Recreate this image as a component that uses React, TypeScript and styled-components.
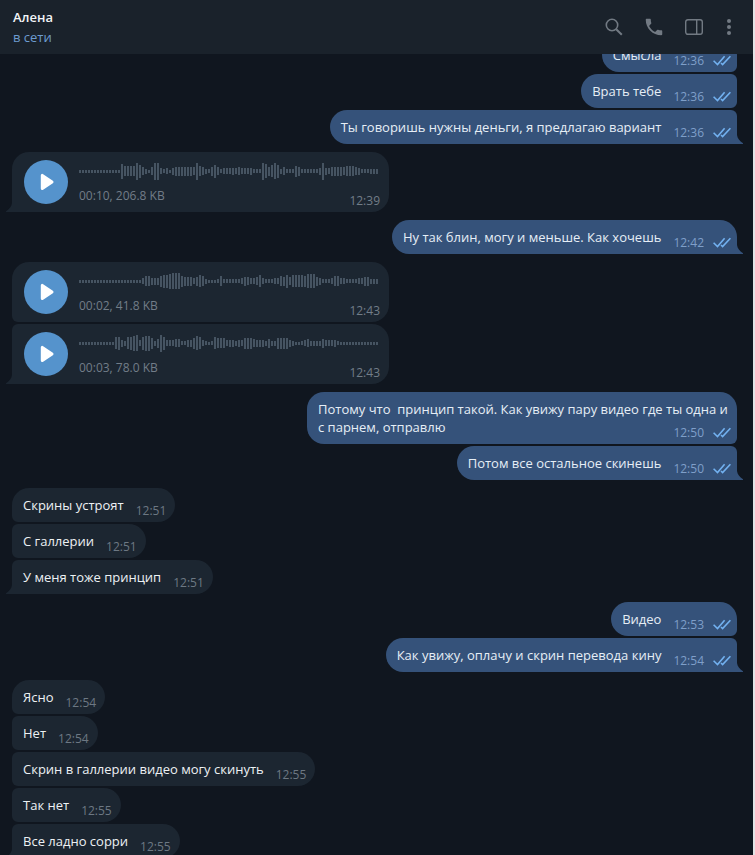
import React from 'react';
import styled, { createGlobalStyle, css } from 'styled-components';

const GlobalStyle = createGlobalStyle`
  * { box-sizing: border-box; }
  body {
    margin: 0;
    background: #10161f;
    font-family: 'Open Sans', 'Noto Sans', sans-serif;
    font-size: 13px;
    line-height: 18px;
  }
  button { font: inherit; }
`;

const Window = styled.div`
  display: flex;
  flex-direction: column;
  height: 100vh;
  overflow: hidden;
  background: #10161f;
  border-right: 2px solid #e3e3e5;
`;

const Header = styled.header`
  position: relative;
  z-index: 1;
  flex: none;
  display: flex;
  align-items: center;
  justify-content: space-between;
  height: 54px;
  padding: 0 13px;
  background: #1a222b;
`;

const Contact = styled.div`
  display: flex;
  flex-direction: column;
  gap: 2px;
`;

const Name = styled.h1`
  margin: 0;
  font-size: 13px;
  font-weight: 600;
  line-height: 18px;
  color: #f2f5f7;
`;

const Status = styled.span`
  color: #6d9cd0;
`;

const Actions = styled.nav`
  display: flex;
  gap: 8px;
`;

const IconButton = styled.button<{ $narrow?: boolean }>`
  display: flex;
  align-items: center;
  justify-content: center;
  width: ${(p) => (p.$narrow ? 22 : 32)}px;
  height: 32px;
  padding: 0;
  border: 0;
  background: none;
  color: #727a83;
  cursor: pointer;
`;

const Feed = styled.main`
  flex: 1;
  min-height: 0;
  display: flex;
  flex-direction: column;
  gap: 8px;
  margin-top: -16px;
  padding: 0 16px 0 12px;
  overflow: hidden;
`;

const Group = styled.section<{ $out: boolean }>`
  flex: none;
  display: flex;
  flex-direction: column;
  align-items: ${(p) => (p.$out ? 'flex-end' : 'flex-start')};
  gap: 2px;
`;

const bubbleSide = {
  out: css`
    background: #35527a;
    color: #e6eef6;
    border-radius: 17px 6px 6px 17px;
    &:first-child { border-top-right-radius: 17px; }
    &:last-child { border-bottom-right-radius: 0; }
  `,
  in: css`
    background: #1c2631;
    color: #edf1f4;
    border-radius: 6px 17px 17px 6px;
    &:first-child { border-top-left-radius: 17px; }
    &:last-child { border-bottom-left-radius: 0; }
  `,
};

const Bubble = styled.article<{ $out: boolean }>`
  position: relative;
  display: flow-root;
  max-width: 430px;
  padding: 8px 8px 8px 11px;
  white-space: pre-wrap;
  ${(p) => (p.$out ? bubbleSide.out : bubbleSide.in)}
`;

const VoiceBubble = styled(Bubble)`
  display: flex;
  gap: 11px;
  width: 377px;
  padding: 8px 9px 3px 12px;
`;

const TailShape = styled.svg<{ $out: boolean }>`
  position: absolute;
  bottom: 0;
  ${(p) => (p.$out ? 'left: 100%;' : 'right: 100%; transform: scaleX(-1);')}
  fill: ${(p) => (p.$out ? '#35527a' : '#1c2631')};
`;

const Meta = styled.span<{ $out: boolean }>`
  float: right;
  display: flex;
  align-items: center;
  gap: 9px;
  margin: 7px ${(p) => (p.$out ? -2 : 1)}px -5px 12px;
  font-size: 12px;
  line-height: 16px;
  color: ${(p) => (p.$out ? '#7f9fc9' : '#6d7883')};
`;

const PlayButton = styled.button`
  flex: none;
  display: flex;
  align-items: center;
  justify-content: center;
  width: 44px;
  height: 44px;
  padding: 0;
  border: 0;
  border-radius: 50%;
  background: #5593cc;
  cursor: pointer;
`;

const VoiceBody = styled.div`
  flex: 1;
  display: flex;
  flex-direction: column;
  gap: 8px;
  padding-top: 2px;
`;

const VoiceFooter = styled.div`
  display: flex;
  justify-content: space-between;
  font-size: 12px;
  line-height: 16px;
  color: #727d88;
`;

const VoiceTime = styled.time`
  padding-top: 5px;
`;

const Tail = ({ out }: { out: boolean }) => (
  <TailShape $out={out} width="6" height="9" viewBox="0 0 6 9" aria-hidden="true">
    <path d="M0 0C.5 3.5 2.5 6 6 8.2V9H0Z" />
  </TailShape>
);

const ReadMark = () => (
  <svg width="18" height="12" viewBox="0 0 18 12" fill="none" stroke="#72b1f0" strokeWidth="1.6" role="img" aria-label="Прочитано">
    <path d="M.6 5.7 4.5 9.5 11.6 1.3M8 8l1.6 1.5L17.4 1.3" />
  </svg>
);

type BarRun = [height: number, count: number];

const expand = (runs: BarRun[]) => runs.flatMap(([height, count]) => Array<number>(count).fill(height));

const waves = {
  first: expand([
    [3, 14], [15, 1], [10, 4], [17, 1], [13, 1], [8, 1], [5, 1], [3, 1], [8, 1], [17, 2], [6, 1], [4, 1], [6, 1], [3, 1], [7, 1],
    [9, 6], [8, 1], [17, 1], [10, 1], [8, 1], [5, 1], [4, 1], [9, 1], [13, 1], [8, 1], [4, 1], [6, 3], [7, 1], [6, 1], [8, 1],
    [6, 3], [7, 1], [4, 3], [17, 1], [14, 1], [9, 1], [12, 1], [16, 1], [13, 1], [5, 1], [8, 1], [4, 3],
    [11, 1], [9, 1], [4, 6], [7, 1], [17, 1], [7, 1], [6, 1], [9, 4], [8, 1], [10, 3], [8, 1], [7, 1], [4, 3], [5, 3],
  ]),
  second: expand([
    [3, 21], [6, 1], [10, 2], [7, 3], [11, 1], [13, 2], [15, 1], [16, 3], [11, 1], [9, 3], [6, 1], [9, 1], [12, 1], [10, 1],
    [5, 1], [3, 3], [4, 1], [10, 1], [4, 6], [6, 1], [9, 1], [8, 1], [6, 2], [8, 1], [12, 1], [6, 1], [4, 3], [6, 2], [10, 1],
    [9, 1], [13, 1], [8, 1], [12, 4], [11, 1], [14, 3], [9, 1], [7, 1], [4, 3], [6, 1], [10, 2], [6, 2], [4, 4], [6, 2], [9, 2], [5, 3],
  ]),
  third: expand([
    [3, 12], [12, 1], [13, 1], [7, 1], [5, 1], [12, 1], [13, 1], [15, 1], [16, 1], [6, 1], [13, 1], [15, 2], [11, 1], [5, 1],
    [9, 1], [17, 1], [13, 1], [6, 3], [8, 2], [4, 2], [7, 2], [11, 1], [14, 1], [12, 1], [6, 1], [4, 1], [3, 1], [4, 1], [12, 1],
    [10, 3], [6, 1], [7, 2], [5, 1], [7, 1], [6, 1], [11, 3], [8, 1], [7, 3], [5, 1], [9, 1], [5, 2], [11, 4], [7, 1], [5, 1],
    [3, 2], [4, 1], [6, 1], [8, 1], [5, 4], [9, 1], [6, 3], [7, 1], [4, 1], [3, 13],
  ]),
};

const Waveform = ({ bars }: { bars: number[] }) => (
  <svg width="300" height="18" viewBox="0 0 300 18" fill="#465462" aria-hidden="true">
    {bars.slice(0, 100).map((height, i) => (
      <rect key={i} x={i * 3} y={9 - Math.floor(height / 2)} width="2" height={height} />
    ))}
  </svg>
);

const Message = ({ out = false, time, children }: { out?: boolean; time: string; children: string }) => (
  <>
    {children}
    <Meta $out={out}>
      <time>{time}</time>
      {out && <ReadMark />}
    </Meta>
  </>
);

type TextItem = { text: string; time: string };
type VoiceItem = { wave: keyof typeof waves; info: string; time: string };
type GroupData = { out?: boolean; items: (TextItem | VoiceItem)[] };

const conversation: GroupData[] = [
  {
    out: true,
    items: [
      { text: 'Смысла', time: '12:36' },
      { text: 'Врать тебе', time: '12:36' },
      { text: 'Ты говоришь нужны деньги, я предлагаю вариант', time: '12:36' },
    ],
  },
  { items: [{ wave: 'first', info: '00:10, 206.8 KB', time: '12:39' }] },
  { out: true, items: [{ text: 'Ну так блин, могу и меньше. Как хочешь', time: '12:42' }] },
  {
    items: [
      { wave: 'second', info: '00:02, 41.8 KB', time: '12:43' },
      { wave: 'third', info: '00:03, 78.0 KB', time: '12:43' },
    ],
  },
  {
    out: true,
    items: [
      { text: 'Потому что  принцип такой. Как увижу пару видео где ты одна и с парнем, отправлю', time: '12:50' },
      { text: 'Потом все остальное скинешь', time: '12:50' },
    ],
  },
  {
    items: [
      { text: 'Скрины устроят', time: '12:51' },
      { text: 'С галлерии', time: '12:51' },
      { text: 'У меня тоже принцип', time: '12:51' },
    ],
  },
  {
    out: true,
    items: [
      { text: 'Видео', time: '12:53' },
      { text: 'Как увижу, оплачу и скрин перевода кину', time: '12:54' },
    ],
  },
  {
    items: [
      { text: 'Ясно', time: '12:54' },
      { text: 'Нет', time: '12:54' },
      { text: 'Скрин в галлерии видео могу скинуть', time: '12:55' },
      { text: 'Так нет', time: '12:55' },
      { text: 'Все ладно сорри', time: '12:55' },
    ],
  },
];

const Voice = ({ item, tail }: { item: VoiceItem; tail: boolean }) => (
  <VoiceBubble $out={false}>
    <PlayButton type="button" aria-label="Воспроизвести">
      <svg width="16" height="18" viewBox="0 0 16 18" fill="#fff" stroke="#fff" strokeWidth="3" strokeLinejoin="round" aria-hidden="true">
        <path d="M4.3 2.4v13.2L14 9Z" />
      </svg>
    </PlayButton>
    <VoiceBody>
      <Waveform bars={waves[item.wave]} />
      <VoiceFooter>
        <span>{item.info}</span>
        <VoiceTime>{item.time}</VoiceTime>
      </VoiceFooter>
    </VoiceBody>
    {tail && <Tail out={false} />}
  </VoiceBubble>
);

export default function App() {
  return (
    <>
      <GlobalStyle />
      <Window>
        <Header>
          <Contact>
            <Name>Алена</Name>
            <Status>в сети</Status>
          </Contact>
          <Actions>
            <IconButton type="button" aria-label="Поиск">
              <svg width="18" height="18" viewBox="0 0 18 18" fill="none" stroke="currentColor" strokeWidth="1.6">
                <circle cx="7" cy="7" r="5.7" />
                <path d="m11.2 11.2 5.6 5.6" strokeWidth="2" />
              </svg>
            </IconButton>
            <IconButton type="button" aria-label="Позвонить">
              <svg width="22" height="22" viewBox="0 0 24 24" fill="currentColor">
                <path d="M6.62 10.79c1.44 2.83 3.76 5.14 6.59 6.59l2.2-2.2c.27-.27.67-.36 1.02-.24 1.12.37 2.33.57 3.57.57.55 0 1 .45 1 1V20c0 .55-.45 1-1 1C10.61 21 3 13.39 3 4c0-.55.45-1 1-1h3.5c.55 0 1 .45 1 1 0 1.25.2 2.45.57 3.57.11.35.03.74-.25 1.02z" />
              </svg>
            </IconButton>
            <IconButton type="button" aria-label="Боковая панель">
              <svg width="18" height="16" viewBox="0 0 18 16" fill="none" stroke="currentColor" strokeWidth="1.4">
                <rect x=".7" y=".7" width="16.6" height="14.6" rx="2.2" />
                <path d="M11.7 1v14" />
              </svg>
            </IconButton>
            <IconButton type="button" aria-label="Меню" $narrow>
              <svg width="4" height="16" viewBox="0 0 4 16" fill="currentColor">
                <circle cx="2" cy="2" r="2" />
                <circle cx="2" cy="8" r="2" />
                <circle cx="2" cy="14" r="2" />
              </svg>
            </IconButton>
          </Actions>
        </Header>
        <Feed>
          {conversation.map((group, g) => (
            <Group key={g} $out={!!group.out}>
              {group.items.map((item, i) => {
                const tail = i === group.items.length - 1;
                return 'wave' in item ? (
                  <Voice key={i} item={item} tail={tail} />
                ) : (
                  <Bubble key={i} $out={!!group.out}>
                    <Message out={group.out} time={item.time}>
                      {item.text}
                    </Message>
                    {tail && <Tail out={!!group.out} />}
                  </Bubble>
                );
              })}
            </Group>
          ))}
        </Feed>
      </Window>
    </>
  );
}
